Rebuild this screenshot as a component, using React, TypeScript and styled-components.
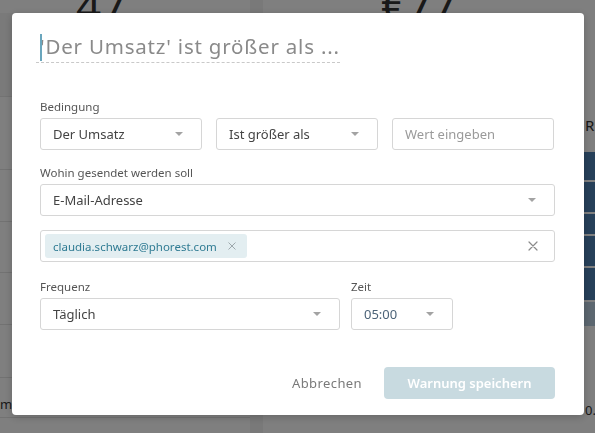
import React from "react";
import styled, { createGlobalStyle } from "styled-components";

const GlobalStyle = createGlobalStyle`
  html, body {
    margin: 0;
    padding: 0;
    width: 595px;
    height: 433px;
    overflow: hidden;
    font-family: "Noto Sans", "Open Sans", sans-serif;
  }
  * { box-sizing: border-box; }
`;

/* ---------- dimmed dashboard behind the dialog ---------- */

const Dashboard = styled.div`
  display: grid;
  grid-template-columns: 250px 13px 1fr;
  width: 595px;
  height: 433px;
  background: #ffffff;
`;

const Gutter = styled.div`
  background: #f2f2f2;
`;

const Card = styled.div`
  display: flex;
  flex-direction: column;
  overflow: hidden;
`;

const BigNumber = styled.div<{ $indent: number }>`
  align-self: flex-start;
  height: 28px;
  margin-top: -15px;
  padding-left: ${(p) => p.$indent}px;
  font-size: 44px;
  line-height: 40px;
  color: #333;
  white-space: nowrap;
`;

const HeaderBand = styled.div<{ $h: number }>`
  height: ${(p) => p.$h}px;
  background: #f4f4f4;
  border-bottom: 1px solid #e6e6e6;
`;

const ListRow = styled.div<{ $h: number; $pad?: number }>`
  height: ${(p) => p.$h}px;
  border-bottom: 1px solid #e4e4e4;
  display: flex;
  align-items: flex-end;
  padding-bottom: ${(p) => p.$pad ?? 16}px;
  font-size: 13px;
  color: #333;
`;

const RightCard = styled.div`
  display: flex;
  flex-direction: column;
  align-items: flex-end;
  overflow: hidden;
`;

const RightLabel = styled.div`
  margin-top: 102px;
  width: 10px;
  height: 20px;
  line-height: 20px;
  font-size: 15px;
  color: #333;
  overflow: hidden;
`;

const BarStack = styled.div`
  display: flex;
  flex-direction: column;
  gap: 2px;
  width: 11px;
  margin-top: 17px;
`;

const Bar = styled.div<{ $h: number; $light?: boolean }>`
  height: ${(p) => p.$h}px;
  background: ${(p) => (p.$light ? "#b9cee0" : "#4d80b3")};
`;

const RightFoot = styled.div`
  margin-top: 76px;
  width: 10px;
  font-size: 13px;
  line-height: 16px;
  color: #333;
  overflow: hidden;
`;

/* ---------- dialog ---------- */

const Overlay = styled.div`
  position: fixed;
  inset: 0;
  background: rgba(0, 0, 0, 0.5);
  display: flex;
  justify-content: center;
  align-items: flex-start;
  padding-top: 13px;
`;

const Dialog = styled.div`
  width: 572px;
  height: 402px;
  margin-left: 1px;
  background: #fff;
  border-radius: 4px;
  box-shadow: 0 2px 8px rgba(0, 0, 0, 0.2);
  padding: 20px 29px 0 28px;
  display: flex;
  flex-direction: column;
`;

const TitleWrap = styled.div`
  position: relative;
  align-self: flex-start;
  margin-left: -4px;
  padding: 0 0 3px 4px;
  border-bottom: 1px dashed #c9c9c9;
`;

const TitleText = styled.div`
  font-size: 20.5px;
  line-height: 26px;
  color: #8a8a8a;
  letter-spacing: 0.8px;
  white-space: nowrap;
`;

const Caret = styled.span`
  position: absolute;
  left: 4px;
  top: 1px;
  width: 1.5px;
  height: 27px;
  background: #6aa6bd;
`;

const Label = styled.div<{ $top: number }>`
  margin-top: ${(p) => p.$top}px;
  margin-bottom: 4px;
  font-size: 11.5px;
  line-height: 14px;
  color: #555;
`;

const Row = styled.div`
  display: flex;
  gap: 14px;
`;

const Col = styled.div<{ $w: number; $shift?: number }>`
  width: ${(p) => p.$w}px;
  margin-left: ${(p) => p.$shift || 0}px;
  display: flex;
  flex-direction: column;
`;

const Field = styled.div<{ $w?: number }>`
  width: ${(p) => (p.$w ? `${p.$w}px` : "100%")};
  height: 32px;
  border: 1px solid #d6d6d6;
  border-radius: 3px;
  display: flex;
  align-items: center;
  padding: 0 12px 0 12px;
  font-size: 13px;
  color: #444;
  background: #fff;
`;

const FieldText = styled.span<{ $muted?: boolean; $tone?: string }>`
  flex: 1;
  color: ${(p) => (p.$muted ? "#9a9a9a" : p.$tone || "#444")};
  white-space: nowrap;
`;

const Chevron = styled.span`
  width: 0;
  height: 0;
  border-left: 4.5px solid transparent;
  border-right: 4.5px solid transparent;
  border-top: 4.5px solid #a3a3a3;
  margin-right: 6px;
`;

const TagField = styled(Field)`
  margin-top: 14px;
  padding: 0 16px 0 4px;
`;

const Tag = styled.span`
  display: inline-flex;
  align-items: center;
  height: 24px;
  padding: 0 11px 0 8px;
  gap: 11px;
  background: #e3eef1;
  border-radius: 3px;
  font-size: 11.5px;
  color: #2f7b93;
`;

const Spacer = styled.span`
  flex: 1;
`;

const XIcon = ({ size, color }: { size: number; color: string }) => (
  <svg width={size} height={size} viewBox="0 0 10 10" fill="none">
    <path d="M1 1L9 9M9 1L1 9" stroke={color} strokeWidth="1.2" strokeLinecap="round" />
  </svg>
);

const Footer = styled.div`
  margin-top: 37px;
  display: flex;
  justify-content: flex-end;
  align-items: center;
`;

const CancelButton = styled.button`
  border: none;
  background: transparent;
  font-family: inherit;
  font-size: 13px;
  letter-spacing: 0.4px;
  color: #7a7a7a;
  width: 94px;
  height: 32px;
  margin-right: 10px;
  padding: 0;
  cursor: pointer;
`;

const SaveButton = styled.button`
  border: none;
  border-radius: 4px;
  background: #c8dae0;
  color: #fff;
  font-family: inherit;
  font-size: 13px;
  font-weight: 600;
  width: 171px;
  height: 32px;
`;

export default function App() {
  return (
    <>
      <GlobalStyle />
      <Dashboard>
        <Card>
          <BigNumber $indent={76}>47</BigNumber>
          <HeaderBand $h={84} />
          <ListRow $h={73} />
          <ListRow $h={52} />
          <ListRow $h={51} />
          <ListRow $h={52} />
          <ListRow $h={53} />
          <ListRow $h={40} $pad={4}>m</ListRow>
        </Card>
        <Gutter />
        <RightCard>
          <BigNumber $indent={118}>€77</BigNumber>
          <RightLabel>R</RightLabel>
          <BarStack>
            <Bar $h={28} />
            <Bar $h={30} />
            <Bar $h={20} />
            <Bar $h={30} />
            <Bar $h={32} />
            <Bar $h={24} $light />
          </BarStack>
          <RightFoot>0.</RightFoot>
        </RightCard>
      </Dashboard>

      <Overlay>
        <Dialog>
          <TitleWrap>
            <Caret />
            <TitleText>'Der Umsatz' ist größer als ...</TitleText>
          </TitleWrap>

          <Label $top={37}>Bedingung</Label>
          <Row>
            <Field $w={162}>
              <FieldText>Der Umsatz</FieldText>
              <Chevron />
            </Field>
            <Field $w={162}>
              <FieldText>Ist größer als</FieldText>
              <Chevron />
            </Field>
            <Field $w={162}>
              <FieldText $muted>Wert eingeben</FieldText>
            </Field>
          </Row>

          <Label $top={16}>Wohin gesendet werden soll</Label>
          <Field>
            <FieldText>E-Mail-Adresse</FieldText>
            <Chevron />
          </Field>

          <TagField>
            <Tag>
              claudia.schwarz@phorest.com
              <XIcon size={8} color="#9aa4a8" />
            </Tag>
            <Spacer />
            <XIcon size={10} color="#8a8a8a" />
          </TagField>

          <Row>
            <Col $w={300}>
              <Label $top={18}>Frequenz</Label>
              <Field>
                <FieldText>Täglich</FieldText>
                <Chevron />
              </Field>
            </Col>
            <Col $w={102} $shift={-3}>
              <Label $top={18}>Zeit</Label>
              <Field>
                <FieldText $tone="#4c6378">05:00</FieldText>
                <Chevron />
              </Field>
            </Col>
          </Row>

          <Footer>
            <CancelButton>Abbrechen</CancelButton>
            <SaveButton>Warnung speichern</SaveButton>
          </Footer>
        </Dialog>
      </Overlay>
    </>
  );
}
